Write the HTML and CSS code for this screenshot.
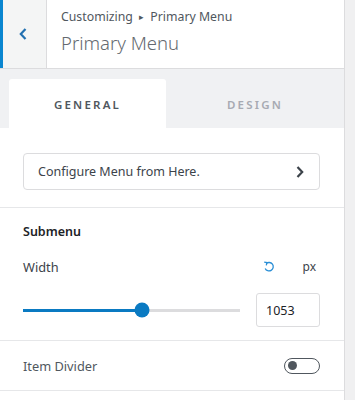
FILE: index.html
```html
<!DOCTYPE html>
<html>
<head>
<meta charset="utf-8">
<link rel="stylesheet" href="styles.css">
</head>
<body>
<div class="app">
  <div class="panel">
    <header class="header">
      <button class="back" aria-label="Back">
        <svg width="10" height="14" viewBox="0 0 10 14"><path d="M7.5 2 L2.8 7 L7.5 12" fill="none" stroke="#2271b1" stroke-width="2.2"/></svg>
      </button>
      <div class="titles">
        <div class="crumb">Customizing <span class="tri">&#9656;</span> Primary Menu</div>
        <div class="title">Primary Menu</div>
      </div>
    </header>
    <nav class="tabs">
      <div class="tab active">GENERAL</div>
      <div class="tab">DESIGN</div>
    </nav>
    <section class="section">
      <div class="linkbtn">
        <span>Configure Menu from Here.</span>
        <svg width="10" height="14" viewBox="0 0 10 14"><path d="M2.5 2 L7.2 7 L2.5 12" fill="none" stroke="#3c434a" stroke-width="2.2"/></svg>
      </div>
    </section>
    <section class="section sub">
      <div class="heading">Submenu</div>
      <div class="rowlabel">
        <span class="lbl">Width</span>
        <span class="tools">
          <svg class="reset" width="12" height="12" viewBox="0 0 12 12"><path d="M3.2 2.6 A4.2 4.2 0 1 1 2.2 7.4" fill="none" stroke="#2b8fd6" stroke-width="1.3"/><path d="M1.2 1.2 L3.9 1.6 L3.3 4.3" fill="none" stroke="#2b8fd6" stroke-width="1.3"/></svg>
          <span class="unit">px</span>
        </span>
      </div>
      <div class="sliderrow">
        <div class="slider">
          <div class="fill" style="width:55%"></div>
          <div class="thumb" style="left:55%"></div>
        </div>
        <div class="num">1053</div>
      </div>
    </section>
    <section class="section toggle-row">
      <span class="lbl2">Item Divider</span>
      <span class="toggle"><span class="knob"></span></span>
    </section>
  </div>
  <div class="scroll"></div>
</div>
</body>
</html>
```
FILE: styles.css
```css
* { box-sizing: border-box; }
html, body { margin: 0; padding: 0; }
body {
  font-family: "Noto Sans", "Open Sans", sans-serif;
  background: #fff;
  width: 355px;
  height: 400px;
  overflow: hidden;
}
.app {
  display: flex;
  height: 400px;
}
.panel {
  width: 344px;
  flex: none;
  background: #fff;
}
.scroll {
  flex: 1;
  background: #f0f0f1;
  border-left: 1px solid #dcdcde;
}
.header {
  display: flex;
  height: 69px;
  border-bottom: 1px solid #dcdcde;
  background: #fff;
}
.back {
  width: 47px;
  flex: none;
  border: 0;
  border-left: 3px solid #0a86d0;
  border-right: 1px solid #dcdcde;
  background: #f4f5f5;
  display: flex;
  align-items: center;
  justify-content: center;
  padding: 0;
  padding-right: 3px;
}
.titles {
  padding-left: 14px;
  padding-top: 7px;
}
.crumb {
  font-size: 12.3px;
  color: #50575e;
  line-height: 20px;
}
.tri { font-size: 9px; position: relative; top: -1px; padding: 0 3px; }
.title {
  font-size: 18.5px;
  font-weight: 300;
  color: #646970;
  line-height: 26px;
  margin-top: 2px;
}
.tabs {
  display: flex;
  background: #f0f1f3;
  height: 59px;
  padding: 10px 0 0 9px;
}
.tab {
  flex: none;
  width: 157px;
  display: flex;
  align-items: center;
  justify-content: center;
  font-size: 11.5px;
  font-weight: 600;
  letter-spacing: 2.2px;
  color: #a7aab2;
  padding-top: 2px;
}
.tab.active {
  background: #fff;
  color: #50575e;
  border-radius: 3px 3px 0 0;
}
.tab + .tab { width: 178px; }
.section {
  border-bottom: 1px solid #e6e7e9;
  padding: 0 24px 0 23px;
}
.section:nth-of-type(1) { padding-top: 25px; padding-bottom: 17px; }
.linkbtn {
  height: 37px;
  border: 1px solid #dcdcde;
  border-radius: 4px;
  display: flex;
  align-items: center;
  justify-content: space-between;
  padding: 0 14px 0 14px;
  font-size: 12.5px;
  color: #3c434a;
}
.sub { padding-top: 15px; padding-bottom: 13px; }
.heading {
  font-size: 12.5px;
  font-weight: 600;
  color: #1d2327;
  line-height: 18px;
}
.rowlabel {
  display: flex;
  justify-content: space-between;
  align-items: center;
  margin-top: 17px;
  line-height: 18px;
}
.lbl { font-size: 12.8px; color: #3c434a; }
.tools { display: flex; align-items: center; gap: 28px; padding-right: 4px; }
.reset { position: relative; top: 0px; }
.unit { font-size: 12px; color: #3c434a; }
.sliderrow {
  display: flex;
  align-items: center;
  margin-top: 17px;
  gap: 16px;
}
.slider {
  position: relative;
  flex: 1;
  height: 3px;
  background: #dcdcde;
}
.fill {
  position: absolute;
  left: 0; top: 0; bottom: 0;
  background: #0a7ac2;
}
.thumb {
  position: absolute;
  top: 50%;
  width: 15px; height: 15px;
  border-radius: 50%;
  background: #0a7ac2;
  transform: translate(-50%, -50%);
}
.num {
  width: 64px;
  height: 34px;
  border: 1px solid #dcdcde;
  border-radius: 3px;
  font-size: 12.5px;
  color: #1d2327;
  display: flex;
  align-items: center;
  padding-left: 9px;
}
.toggle-row {
  display: flex;
  justify-content: space-between;
  align-items: center;
  height: 50px;
}
.lbl2 { font-size: 12.8px; color: #50575e; }
.toggle {
  width: 36px;
  height: 16px;
  border: 1.5px solid #50575e;
  border-radius: 8px;
  display: flex;
  align-items: center;
  padding-left: 3px;
}
.knob {
  width: 9px; height: 9px;
  border-radius: 50%;
  background: #50575e;
}
```
